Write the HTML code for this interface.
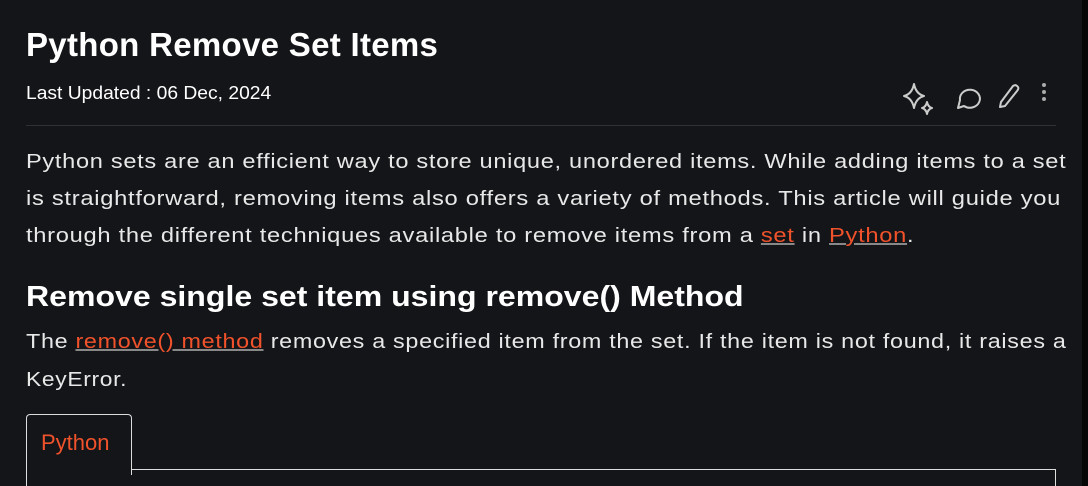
<!DOCTYPE html>
<html style="margin:0;width:1088px;height:486px;overflow:hidden"><head><meta charset="utf-8"><style>
body{margin:0;width:1088px;height:486px;background:#141519;overflow:hidden;font-family:"Liberation Sans",sans-serif;color:#fff;position:relative}
.a{position:absolute;white-space:nowrap;transform-origin:0 0}
.t{left:26px;top:26px;font-size:33px;font-weight:bold;letter-spacing:0.3px}
.d{left:26px;top:83px;font-size:18px;transform:scaleX(1.07)}
.hr{position:absolute;left:26px;top:125px;width:1030px;height:1px;background:#2e3036}
.p{left:26px;font-size:20px;color:#e8e8e8;letter-spacing:0.6px}
a{color:#f0522b;text-decoration:underline;text-decoration-color:#888}
.h{left:26px;top:281px;font-size:29px;font-weight:bold;transform:scaleX(1.105)}
.strip{position:absolute;left:1082px;top:0;width:6px;height:486px;background:#060607}
.tab{position:absolute;left:26px;top:414px;width:104px;height:60px;border:1px solid #ddd;border-bottom:none;border-radius:4px 4px 0 0;background:#141519}
.tab span{position:absolute;left:14px;top:15px;font-size:22px;color:#f0522b}
.box{position:absolute;left:26px;top:469px;width:1028px;height:30px;border:1px solid #ddd}
</style></head><body>
<div class="a t">Python Remove Set Items</div>
<div class="a d">Last Updated : 06 Dec, 2024</div>
<svg class="a" style="left:900px;top:80px" width="150" height="40" viewBox="0 0 150 40">
<g fill="none" stroke="#ccc" stroke-width="2" stroke-linejoin="round">
<path d="M14 4 Q16 14 24 16 Q16 18 14 28 Q12 18 4 16 Q12 14 14 4Z"/>
<path d="M27 22 Q28 27 32 28 Q28 29 27 34 Q26 29 22 28 Q26 27 27 22Z"/>
<path d="M60 20 A10 9 0 1 1 64 26 L58 28 Z"/>
<path d="M101 22 L113 6 Q116 4 118 7 Q119 9 117 11 L105 26 L100 27 Z"/>
</g>
<g fill="#aaa"><circle cx="144" cy="5" r="2"/><circle cx="144" cy="12" r="2"/><circle cx="144" cy="19" r="2"/></g>
</svg>
<div class="hr"></div>
<div class="a p" style="top:151px;transform:scaleX(1.178)">Python sets are an efficient way to store unique, unordered items. While adding items to a set</div>
<div class="a p" style="top:188px;transform:scaleX(1.186)">is straightforward, removing items also offers a variety of methods. This article will guide you</div>
<div class="a p" style="top:225px;transform:scaleX(1.184)">through the different techniques available to remove items from a <a>set</a> in <a>Python</a>.</div>
<div class="a h">Remove single set item using remove() Method</div>
<div class="a p" style="top:331px;transform:scaleX(1.166)">The <a>remove() method</a> removes a specified item from the set. If the item is not found, it raises a</div>
<div class="a p" style="top:369px;transform:scaleX(1.14)">KeyError.</div>
<div class="box"></div>
<div class="tab"><span>Python</span></div>
<div class="strip"></div>
</body></html>
